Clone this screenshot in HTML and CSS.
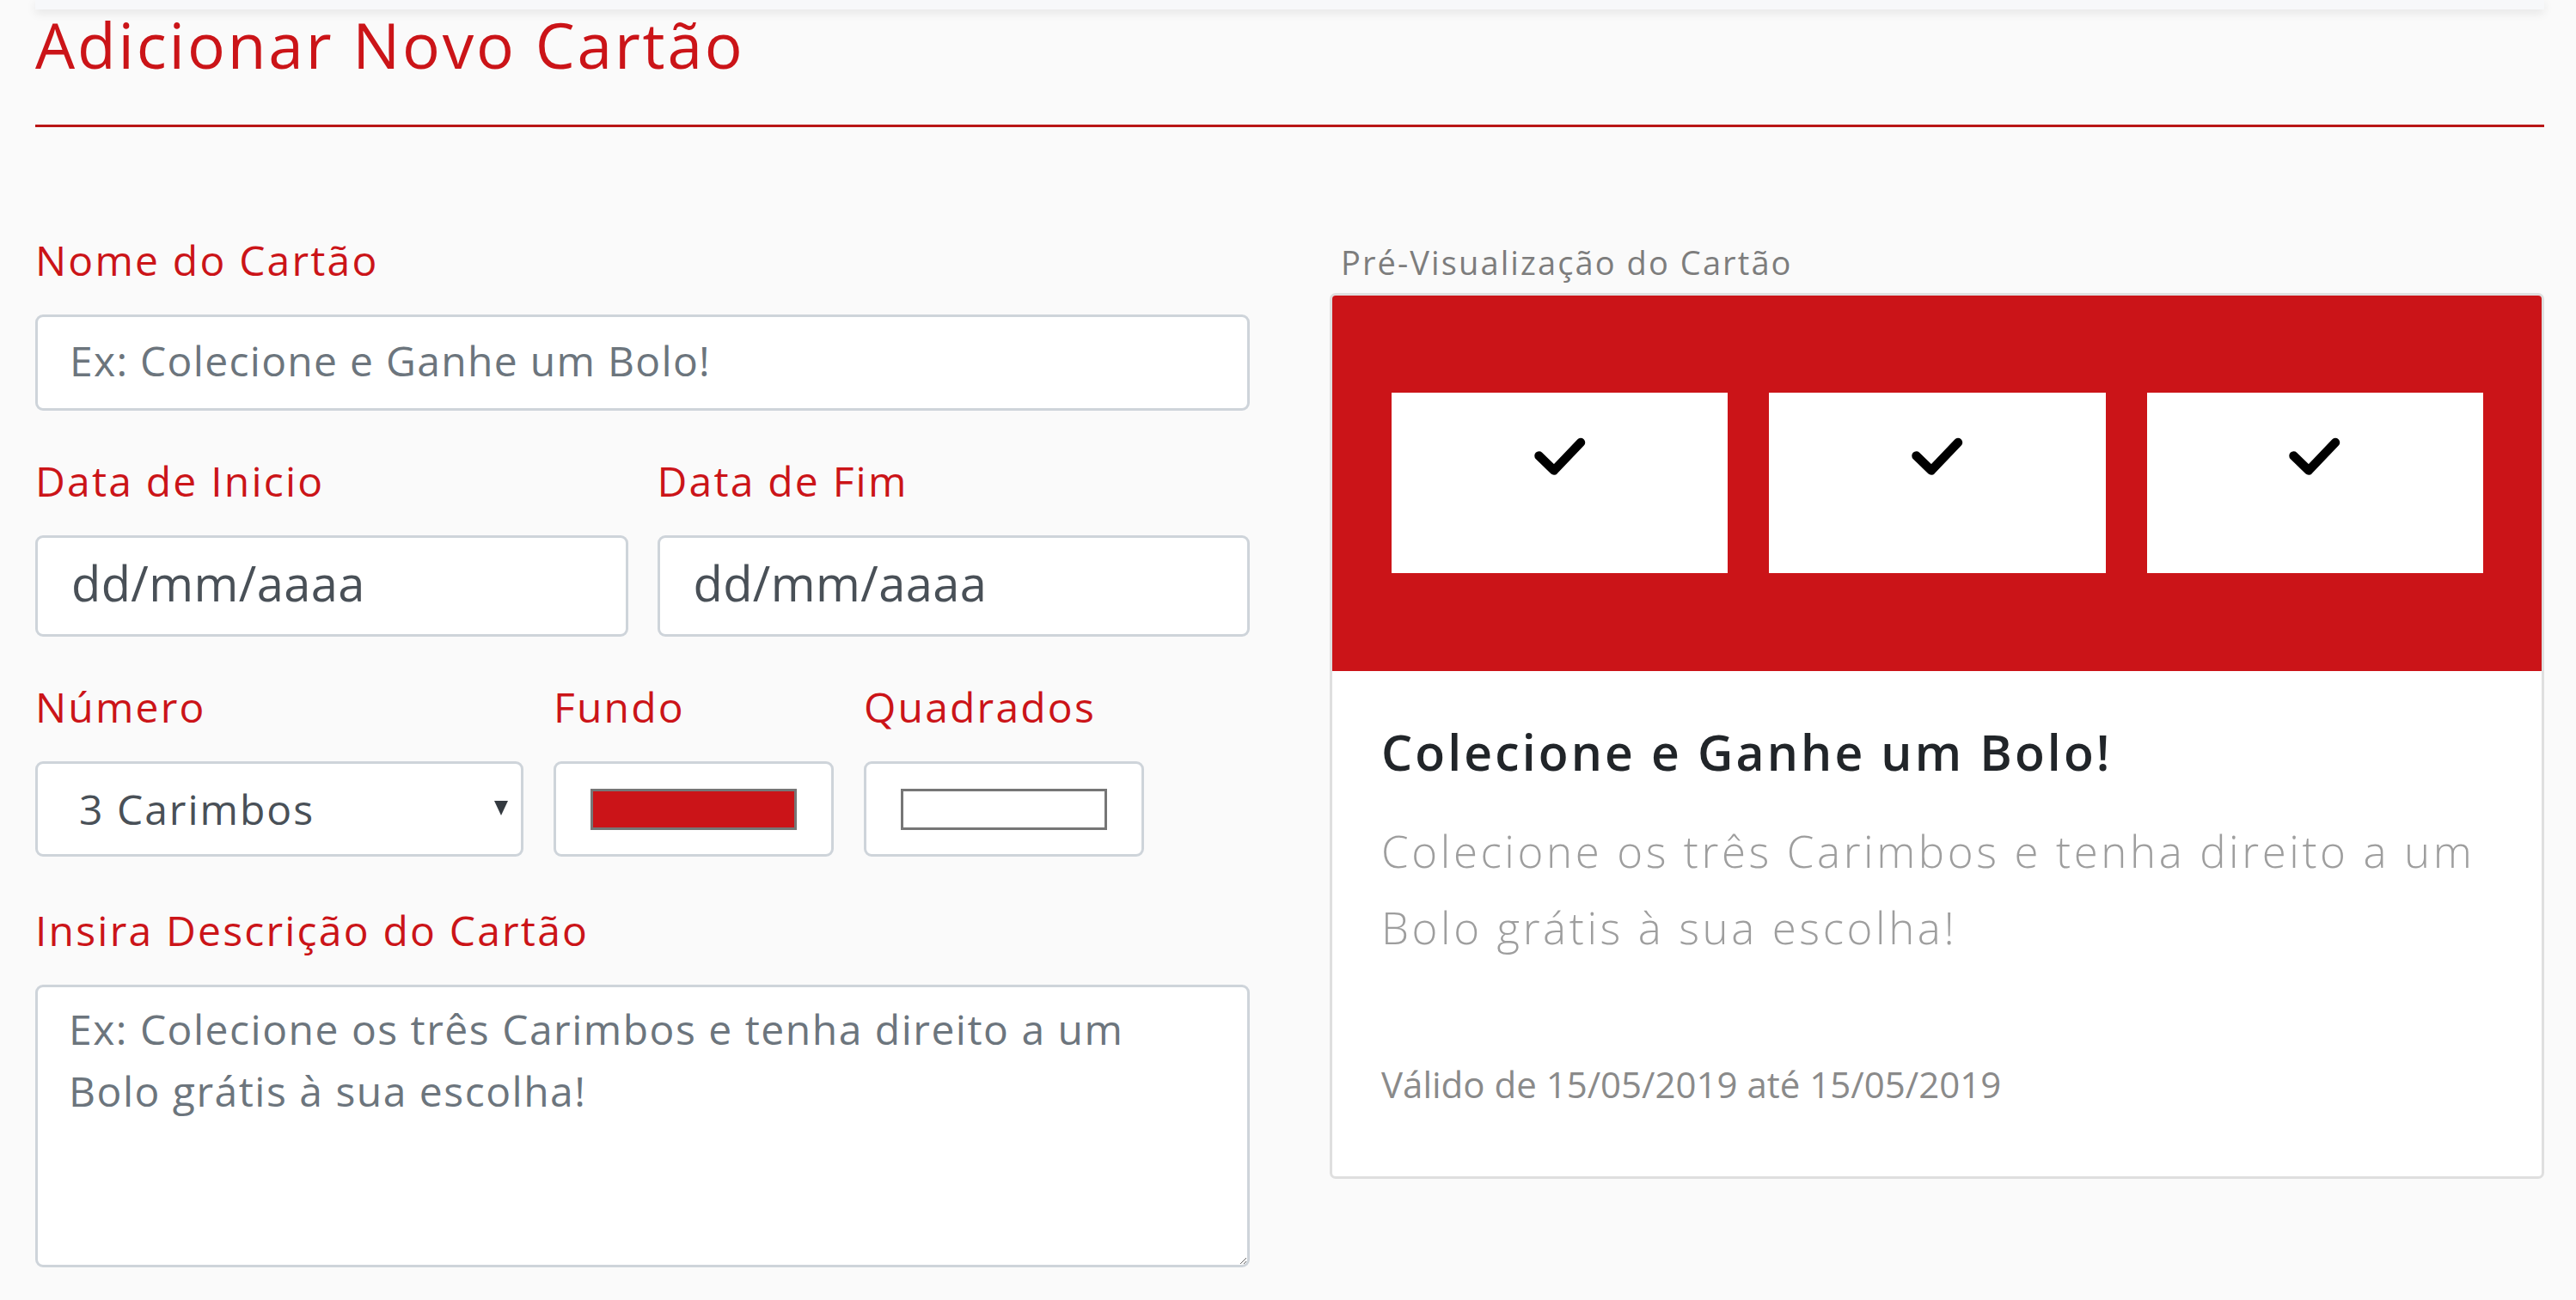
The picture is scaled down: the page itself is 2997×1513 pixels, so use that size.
FILE: index.html
```html
<!DOCTYPE html>
<html lang="pt">
<head>
<meta charset="utf-8">
<title>Adicionar Novo Cartão</title>
<link rel="stylesheet" href="styles.css">
</head>
<body>
<div class="page">
  <div class="topbar"></div>
  <h1 class="title">Adicionar Novo Cartão</h1>
  <div class="rule"></div>

  <div class="layout">
    <form class="form">
      <div class="group">
        <label class="label" for="nome">Nome do Cartão</label>
        <input class="control" id="nome" type="text" placeholder="Ex: Colecione e Ganhe um Bolo!">
      </div>

      <div class="group row-2">
        <div>
          <label class="label" for="inicio">Data de Inicio</label>
          <input class="control date" id="inicio" type="text" value="dd/mm/aaaa" readonly>
        </div>
        <div>
          <label class="label" for="fim">Data de Fim</label>
          <input class="control date" id="fim" type="text" value="dd/mm/aaaa" readonly>
        </div>
      </div>

      <div class="group row-3">
        <div>
          <label class="label" for="numero">Número</label>
          <div class="select-wrap">
            <select class="control select" id="numero">
              <option>3 Carimbos</option>
              <option>4 Carimbos</option>
              <option>5 Carimbos</option>
            </select>
          </div>
        </div>
        <div>
          <span class="label">Fundo</span>
          <div class="control color-box"><span class="swatch swatch-red"></span></div>
        </div>
        <div>
          <span class="label">Quadrados</span>
          <div class="control color-box"><span class="swatch swatch-white"></span></div>
        </div>
      </div>

      <div class="group last">
        <label class="label" for="descricao">Insira Descrição do Cartão</label>
        <textarea class="control textarea" id="descricao" placeholder="Ex: Colecione os três Carimbos e tenha direito a um&#10;Bolo grátis à sua escolha!"></textarea>
      </div>
    </form>

    <section class="preview">
      <div class="preview-label">Pré-Visualização do Cartão</div>
      <div class="card">
        <div class="card-head">
          <div class="stamp"><svg class="check" viewBox="0 0 60 45" width="60" height="45"><polyline points="5.5,21.5 23,38.5 54,6" fill="none" stroke="#000" stroke-width="10.5" stroke-linecap="round" stroke-linejoin="round"/></svg></div>
          <div class="stamp"><svg class="check" viewBox="0 0 60 45" width="60" height="45"><polyline points="5.5,21.5 23,38.5 54,6" fill="none" stroke="#000" stroke-width="10.5" stroke-linecap="round" stroke-linejoin="round"/></svg></div>
          <div class="stamp"><svg class="check" viewBox="0 0 60 45" width="60" height="45"><polyline points="5.5,21.5 23,38.5 54,6" fill="none" stroke="#000" stroke-width="10.5" stroke-linecap="round" stroke-linejoin="round"/></svg></div>
        </div>
        <div class="card-body">
          <h2 class="card-title">Colecione e Ganhe um Bolo!</h2>
          <p class="card-text">Colecione os três Carimbos e tenha direito a um Bolo grátis à sua escolha!</p>
          <p class="card-valid">Válido de 15/05/2019 até 15/05/2019</p>
        </div>
      </div>
    </section>
  </div>
</div>
</body>
</html>
```

FILE: styles.css
```css
* {
  box-sizing: border-box;
}

html, body {
  margin: 0;
  padding: 0;
  background: #fafafa;
}

body {
  font-family: "Open Sans", "Noto Sans", sans-serif;
  color: #212529;
}

.page {
  width: 2919px;
  margin-left: 41px;
}

.topbar {
  height: 11px;
  background: #f7f8fa;
  box-shadow: 0 4px 12px rgba(0, 0, 0, 0.09);
}

.title {
  margin: 4px 0 0 0;
  font-size: 73px;
  line-height: 1;
  font-weight: 400;
  color: #cb1418;
  letter-spacing: 2.85px;
}

.rule {
  margin-top: 57px;
  height: 3px;
  background: #b91616;
}

.layout {
  display: grid;
  grid-template-columns: 1413px 1413px;
  column-gap: 93px;
  margin-top: 131px;
  align-items: start;
}

/* ---------- form ---------- */

.group {
  margin-bottom: 58px;
}

.group.row-3 {
  margin-bottom: 62px;
}

.group.last {
  margin-bottom: 0;
}

.label {
  display: block;
  font-size: 48px;
  line-height: 1;
  color: #cb1418;
  letter-spacing: 2.2px;
  margin-bottom: 39px;
}

.control {
  display: block;
  width: 100%;
  height: 112px;
  margin: 0;
  padding: 26px 37px 32px;
  font-family: inherit;
  letter-spacing: 1.3px;
  font-size: 48px;
  line-height: 48px;
  color: #495057;
  background: #fff;
  border: 3px solid #ced4da;
  border-radius: 9px;
  outline: none;
}

.control::placeholder {
  color: #6c757d;
  opacity: 1;
}

.row-2 {
  display: grid;
  grid-template-columns: 1fr 1fr;
  column-gap: 34px;
}

.control.date {
  height: 118px;
  font-size: 56px;
  line-height: 56px;
  letter-spacing: 0.4px;
  padding: 24px 39px 32px;
  color: #495057;
}

.row-3 {
  display: grid;
  grid-template-columns: 568px 326px 326px;
  column-gap: 35px;
}

.select-wrap {
  position: relative;
}

.select-wrap::after {
  content: "";
  position: absolute;
  right: 18px;
  top: 46px;
  border-left: 8px solid transparent;
  border-right: 8px solid transparent;
  border-top: 17px solid #343a40;
  pointer-events: none;
}

.control.select {
  appearance: none;
  -webkit-appearance: none;
  height: 111px;
  padding: 29px 40px 28px 48px;
  letter-spacing: 2px;
}

.color-box {
  height: 111px;
  padding: 28px 40px;
  display: flex;
  align-items: center;
  justify-content: center;
}

.swatch {
  display: block;
  width: 240px;
  height: 48px;
  border: 3px solid #767676;
}

.swatch-red {
  background: #cb1418;
}

.swatch-white {
  background: #fff;
}

.control.textarea {
  height: 329px;
  padding: 13px 36px;
  line-height: 72px;
  letter-spacing: 1.5px;
  resize: vertical;
  overflow: hidden;
}

/* ---------- preview ---------- */

.preview-label {
  margin: 7px 0 17px 13px;
  font-size: 38px;
  line-height: 1;
  letter-spacing: 2.1px;
  color: #7d7d7d;
}

.card {
  background: #fff;
  border: 3px solid #dfdfdf;
  border-radius: 7px;
  overflow: hidden;
}

.card-head {
  background: #cb1418;
  padding: 113px 68px 114px 69px;
  display: grid;
  grid-template-columns: repeat(3, 1fr);
  column-gap: 48px;
}

.stamp {
  height: 210px;
  background: #fff;
  display: flex;
  justify-content: center;
  align-items: flex-start;
  padding-top: 52px;
}

.check {
  display: block;
}

.card-body {
  padding: 60px 30px 76px 57px;
}

.card-title {
  margin: 0;
  font-size: 57px;
  line-height: 1.2;
  font-weight: 600;
  letter-spacing: 3.15px;
  color: #212529;
}

.card-text {
  margin: 37px 0 0 0;
  font-size: 51px;
  line-height: 89px;
  font-weight: 300;
  letter-spacing: 3.6px;
  color: #9e9e9e;
}

.card-valid {
  margin: 106px 0 0 0;
  font-size: 42px;
  line-height: 63px;
  letter-spacing: 0;
  color: #8a8a8a;
}
```
